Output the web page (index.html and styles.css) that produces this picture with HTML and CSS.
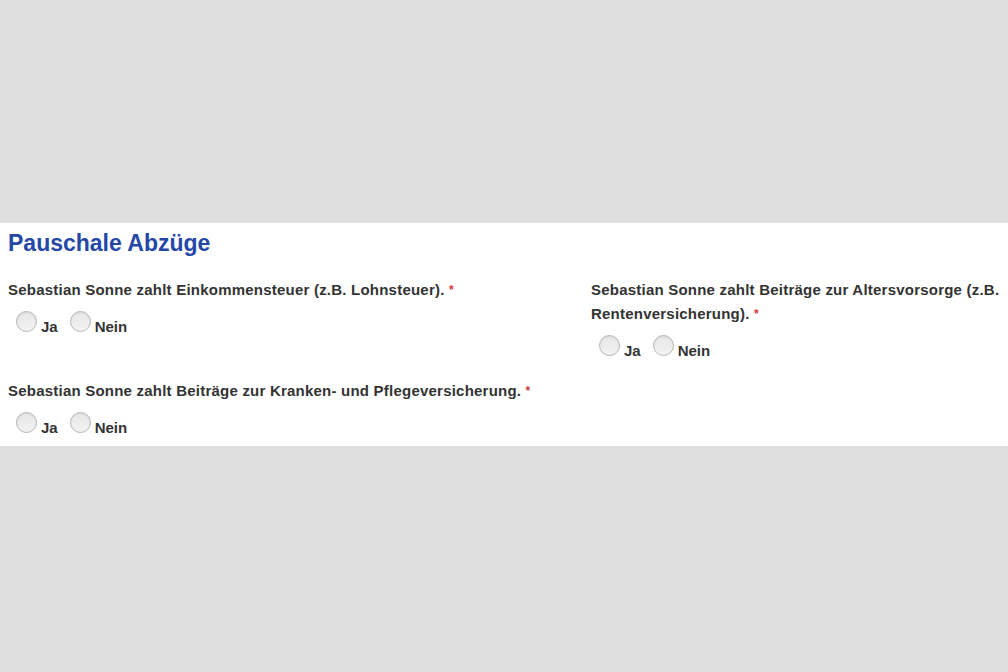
FILE: index.html
```html
<!DOCTYPE html>
<html lang="de">
<head>
    <meta charset="UTF-8">
    <meta name="viewport" content="width=device-width, initial-scale=1.0">
    <title>Pauschale Abzüge</title>
    <link rel="stylesheet" href="styles.css">
</head>
<body>
    <div class="panel">
        <h2 class="panel-title">Pauschale Abzüge</h2>
        <form class="questions">
            <div class="question">
                <div class="question-text">Sebastian Sonne zahlt Einkommensteuer (z.B. Lohnsteuer). <span class="required">*</span></div>
                <div class="options">
                    <label class="option"><input type="radio" name="steuer" value="ja"><span>Ja</span></label>
                    <label class="option"><input type="radio" name="steuer" value="nein"><span>Nein</span></label>
                </div>
            </div>
            <div class="question">
                <div class="question-text">Sebastian Sonne zahlt Beiträge zur Altersvorsorge (z.B. Rentenversicherung). <span class="required">*</span></div>
                <div class="options">
                    <label class="option"><input type="radio" name="rente" value="ja"><span>Ja</span></label>
                    <label class="option"><input type="radio" name="rente" value="nein"><span>Nein</span></label>
                </div>
            </div>
            <div class="question">
                <div class="question-text">Sebastian Sonne zahlt Beiträge zur Kranken- und Pflegeversicherung. <span class="required">*</span></div>
                <div class="options">
                    <label class="option"><input type="radio" name="kranken" value="ja"><span>Ja</span></label>
                    <label class="option"><input type="radio" name="kranken" value="nein"><span>Nein</span></label>
                </div>
            </div>
        </form>
    </div>
</body>
</html>
```

FILE: styles.css
```css
body { margin: 0; background: #dfdfdf; font-family: "Liberation Sans", Arial, sans-serif; }
.panel { margin-top: 223px; background: #fff; padding: 7px 0 10px 8px; }
.panel-title { margin: 0; font-size: 23px; line-height: 26px; font-weight: bold; color: #2447a8; }
.questions { display: grid; grid-template-columns: 575px 1fr; column-gap: 8px; row-gap: 20px; margin-top: 22px; }
.question-text { font-size: 15px; line-height: 24px; font-weight: bold; color: #333; letter-spacing: 0.22px; }
.required { font-size: 12px; color: #d03a3a; vertical-align: top; }
.options { display: flex; gap: 12px; margin-top: 9px; padding-left: 8px; }
.option { display: inline-flex; align-items: flex-end; font-size: 15px; font-weight: bold; color: #333; }
.option input { appearance: none; -webkit-appearance: none; width: 21px; height: 21px; margin: 0 4px 3px 0; border-radius: 50%; border: 1px solid #b4b4b4; background: linear-gradient(#e6e6e6, #f3f3f3); box-shadow: inset 0 1px 2px rgba(0,0,0,0.06); }
```
